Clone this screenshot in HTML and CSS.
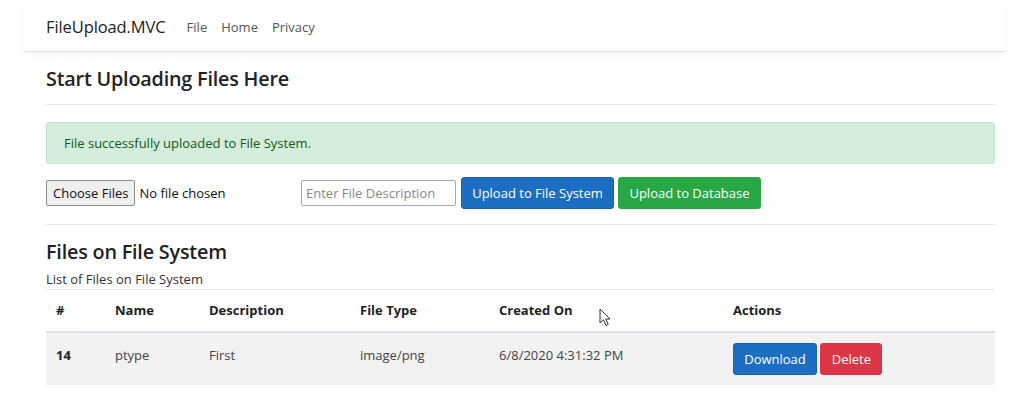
FILE: index.html
```html
<!DOCTYPE html>
<html>
<head>
<meta charset="utf-8">
<link rel="stylesheet" href="styles.css">
</head>
<body>
<header class="navbar">
  <span class="brand">FileUpload.MVC</span>
  <nav class="nav">
    <a class="nav-link">File</a>
    <a class="nav-link">Home</a>
    <a class="nav-link">Privacy</a>
  </nav>
</header>
<main class="container">
  <h4 class="title">Start Uploading Files Here</h4>
  <div class="rule"></div>
  <div class="alert">File successfully uploaded to File System.</div>
  <form class="upload-row">
    <div class="file-input">
      <span class="choose">Choose Files</span>
      <span class="nofile">No file chosen</span>
    </div>
    <input class="desc" type="text" placeholder="Enter File Description">
    <button type="button" class="btn btn-primary">Upload to File System</button>
    <button type="button" class="btn btn-success">Upload to Database</button>
  </form>
  <div class="rule rule-2"></div>
  <h4 class="title title-2">Files on File System</h4>
  <p class="caption">List of Files on File System</p>
  <table class="table">
    <thead>
      <tr>
        <th class="c1">#</th>
        <th class="c2">Name</th>
        <th class="c3">Description</th>
        <th class="c4">File Type</th>
        <th class="c5">Created On</th>
        <th class="c6">Actions</th>
      </tr>
    </thead>
    <tbody>
      <tr>
        <th class="c1">14</th>
        <td>ptype</td>
        <td>First</td>
        <td>image/png</td>
        <td>6/8/2020 4:31:32 PM</td>
        <td class="actions">
          <button type="button" class="btn btn-primary btn-sm">Download</button>
          <button type="button" class="btn btn-danger btn-sm">Delete</button>
        </td>
      </tr>
    </tbody>
  </table>
</main>
<svg class="cursor" width="12" height="19" viewBox="0 0 12 19">
  <path d="M1 1 L1 15 L4.5 11.8 L7 17.5 L9.2 16.5 L6.8 11 L11 11 Z" fill="#fff" stroke="#333" stroke-width="1" stroke-linejoin="round"/>
</svg>
</body>
</html>
```
FILE: styles.css
```css
* { box-sizing: border-box; }
html, body { margin: 0; padding: 0; background: #fff; }
body {
  font-family: "Open Sans", "Noto Sans", sans-serif;
  font-size: 13px;
  color: #212529;
  position: relative;
  width: 1018px;
  height: 407px;
  overflow: hidden;
}
.navbar {
  margin: 0 12px 0 24px;
  height: 52px;
  display: flex;
  align-items: center;
  padding-left: 22px;
  padding-top: 2px;
  border-bottom: 1px solid #e3e3e3;
  box-shadow: 0 4px 10px rgba(0,0,0,0.04);
}
.brand {
  font-size: 16.5px;
  color: #222;
  margin-right: 21px;
  letter-spacing: -0.1px;
}
.nav { display: flex; gap: 14px; }
.nav-link { color: #555; font-size: 13px; }
.container {
  margin: 0 23px 0 46px;
  width: 949px;
}
.title {
  margin: 0;
  font-size: 19.8px;
  font-weight: 600;
  color: #222;
  padding-top: 14px;
  line-height: 26px;
  letter-spacing: -0.2px;
}
.rule {
  height: 1px;
  background: #e8e8e8;
  margin-top: 12px;
}
.alert {
  margin-top: 17px;
  height: 42px;
  background: #d4edda;
  border: 1px solid #c3e6cb;
  border-radius: 3px;
  color: #155724;
  padding-left: 17px;
  display: flex;
  align-items: center;
}
.upload-row {
  margin: 13px 0 0 0;
  display: flex;
  align-items: center;
  height: 32px;
}
.file-input { display: flex; align-items: center; width: 255px; }
.choose {
  display: inline-flex;
  align-items: center;
  height: 26px;
  padding: 0 6px;
  border: 1px solid #8f8f8f;
  border-radius: 2px;
  background: #efefef;
  color: #111;
  margin-right: 4px;
}
.nofile { color: #111; }
.desc {
  width: 155px;
  height: 26px;
  border: 1px solid #aaa;
  border-radius: 2px;
  padding: 0 4px;
  font-family: inherit;
  font-size: 13px;
  margin-right: 5px;
}
.desc::placeholder { color: #888; }
.btn {
  font-family: inherit;
  font-size: 13px;
  height: 32px;
  padding: 0 10px;
  border: 1px solid transparent;
  border-radius: 3px;
  color: #fff;
  cursor: pointer;
}
.btn-primary { background: #1b6ec2; border-color: #1861ac; width: 153px; margin-right: 4px; }
.btn-success { background: #28a745; border-color: #28a745; width: 143px; }
.btn-danger { background: #dc3545; border-color: #dc3545; }
.rule-2 { margin-top: 15px; }
.title-2 { padding-top: 14px; }
.caption { margin: 6px 0 0 0; color: #333; line-height: 16px; }
.table {
  margin-top: 2px;
  width: 949px;
  border-collapse: collapse;
  border-top: 1px solid #e8e8e8;
}
.table th, .table td {
  text-align: left;
  padding: 0 10px;
  vertical-align: top;
}
.table thead th {
  height: 42px;
  vertical-align: middle;
  font-weight: 700;
  color: #222;
  border-bottom: 2px solid #dee2e6;
}
.table tbody tr { background: #f2f2f2; height: 53px; }
.table tbody td, .table tbody th { padding-top: 13px; color: #444; }
.table tbody th { color: #222; font-weight: 700; }
.c1 { width: 59px; }
.c2 { width: 94px; }
.c3 { width: 151px; }
.c4 { width: 139px; }
.c5 { width: 234px; }
.table tbody td.actions { padding-top: 10px; }
.btn-sm { height: 32px; padding: 0 10px; margin: 0; width: auto; }
.actions .btn-primary { width: 84px; margin-right: 0; }
.actions .btn-danger { width: 62px; }
.cursor { position: absolute; left: 599px; top: 308px; }
```
